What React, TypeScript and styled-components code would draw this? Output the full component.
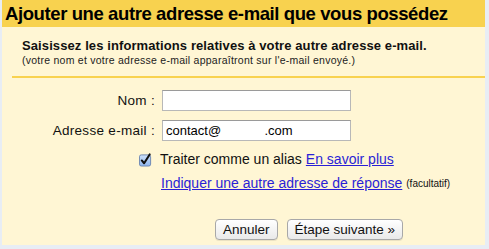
import React from "react";
import styled, { createGlobalStyle } from "styled-components";

const Global = createGlobalStyle`
  html, body {
    margin: 0;
    padding: 0;
    background: #e8edf4;
    font-family: "Liberation Sans", Arial, sans-serif;
  }
`;

const Panel = styled.div`
  margin-left: 2px;
  width: 483px;
  height: 245px;
  background: #fff6d4;
  display: flex;
  flex-direction: column;
`;

const Header = styled.div`
  height: 27px;
  background: #f8d24f;
  display: flex;
  align-items: center;
  padding-left: 3px;
  font-size: 18.5px;
  font-weight: bold;
  color: #000;
  letter-spacing: -0.4px;
  white-space: nowrap;
  overflow: hidden;
`;

const Intro = styled.div`
  margin: 11px 0 0 10px;
  padding: 0 0 9px 10px;
  border-bottom: 2px solid #f8d24f;
`;

const IntroTitle = styled.div`
  font-size: 13px;
  font-weight: bold;
  color: #111;
  line-height: 16px;
  letter-spacing: 0.1px;
`;

const IntroNote = styled.div`
  font-size: 10.5px;
  color: #222;
  line-height: 13px;
  letter-spacing: 0.25px;
`;

const Form = styled.div`
  display: grid;
  grid-template-columns: 153px 190px;
  column-gap: 7px;
  row-gap: 9px;
  align-items: center;
  margin-top: 12px;
`;

const Label = styled.label`
  text-align: right;
  font-size: 13.5px;
  letter-spacing: 0.3px;
  color: #111;
`;

const Input = styled.input`
  box-sizing: border-box;
  width: 189px;
  height: 21px;
  border: 1px solid #b8b8b8;
  border-top-color: #9a9a9a;
  background: #fff;
  font-family: "Liberation Sans", Arial, sans-serif;
  font-size: 13px;
  padding: 0 3px;
  outline: none;
`;

const Options = styled.div`
  margin-left: 137px;
  margin-top: 10px;
  display: flex;
  flex-direction: column;
  gap: 8px;
  font-size: 14px;
  color: #111;
`;

const OptionRow = styled.div<{ $indent?: number }>`
  display: flex;
  align-items: center;
  padding-left: ${(p) => p.$indent ?? 0}px;
  white-space: nowrap;
`;

const Check = styled.span`
  width: 13px;
  height: 13px;
  margin-right: 8px;
  display: inline-flex;
`;

const Link = styled.a<{ $gap?: number }>`
  color: #2a1fd6;
  text-decoration: underline;
  margin-left: ${(p) => p.$gap ?? 4}px;
  cursor: pointer;
`;

const Small = styled.span`
  font-size: 10px;
  margin-left: 4px;
`;

const Buttons = styled.div`
  display: flex;
  gap: 9px;
  margin-top: 28px;
  margin-left: 213px;
`;

const Button = styled.button`
  font-family: "Liberation Sans", Arial, sans-serif;
  font-size: 13.5px;
  height: 21px;
  padding: 0 7px;
  border: 1px solid #a8a8a8;
  border-radius: 4px;
  background: linear-gradient(#ffffff, #e9e9e9);
  color: #111;
  box-shadow: 0 1px 0 rgba(0, 0, 0, 0.08);
`;

function CheckBox() {
  return (
    <Check>
      <svg width="14" height="14" viewBox="0 0 14 14">
        <defs>
          <linearGradient id="cb" x1="0" y1="0" x2="0" y2="1">
            <stop offset="0" stopColor="#cfe2fb" />
            <stop offset="1" stopColor="#8fb6ee" />
          </linearGradient>
        </defs>
        <rect x="0.5" y="1.5" width="12" height="12" rx="2" fill="url(#cb)" stroke="#6a84b0" />
        <path d="M3 7.5 L5.5 10.5 L11.5 1" fill="none" stroke="#111" strokeWidth="2.2" strokeLinecap="round" strokeLinejoin="round" />
      </svg>
    </Check>
  );
}

export default function App() {
  return (
    <>
      <Global />
      <Panel>
        <Header>Ajouter une autre adresse e-mail que vous possédez</Header>
        <Intro>
          <IntroTitle>Saisissez les informations relatives à votre autre adresse e-mail.</IntroTitle>
          <IntroNote>(votre nom et votre adresse e-mail apparaîtront sur l'e-mail envoyé.)</IntroNote>
        </Intro>
        <Form>
          <Label>Nom :</Label>
          <Input defaultValue="" />
          <Label>Adresse e-mail :</Label>
          <Input defaultValue="contact@            .com" />
        </Form>
        <Options>
          <OptionRow>
            <CheckBox />
            Traiter comme un alias<Link>En savoir plus</Link>
          </OptionRow>
          <OptionRow $indent={22}>
            <Link $gap={0}>Indiquer une autre adresse de réponse</Link>
            <Small>(facultatif)</Small>
          </OptionRow>
        </Options>
        <Buttons>
          <Button>Annuler</Button>
          <Button>Étape suivante »</Button>
        </Buttons>
      </Panel>
    </>
  );
}
